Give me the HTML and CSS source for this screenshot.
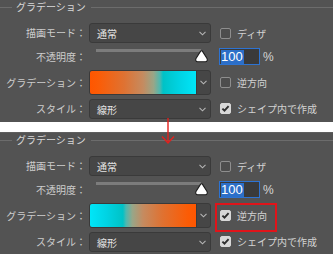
FILE: index.html
```html
<!DOCTYPE html>
<html lang="ja">
<head>
<meta charset="utf-8">
<link rel="stylesheet" href="styles.css">
</head>
<body>
<div class="panel">
  <div class="title"><span class="ln short"></span><span class="ttl">グラデーション</span><span class="ln"></span></div>
  <div class="grid">
    <div class="lbl">描画モード：</div>
    <div class="sel"><span>通常</span><svg class="chev" width="7" height="5" viewBox="0 0 7 5"><polyline points="0.5,0.8 3.5,3.8 6.5,0.8"/></svg></div>
    <div class="chk"><span class="box"></span>ディザ</div>

    <div class="lbl">不透明度：</div>
    <div class="slider"><div class="track"></div><svg class="thumb" width="13" height="13" viewBox="0 0 13 13"><path d="M6.5 0.8C7 0.8 7.4 1.1 7.7 1.6L12 8.5C12.7 9.8 12.1 11.8 10.4 11.8L2.6 11.8C0.9 11.8 0.3 9.8 1 8.5L5.3 1.6C5.6 1.1 6 0.8 6.5 0.8Z"/></svg></div>
    <div class="pct"><span class="num"><span class="hl">100</span></span><span class="unit">%</span></div>

    <div class="lbl">グラデーション：</div>
    <div class="grad"><div class="bar fwd"></div><div class="btn"><svg class="chev" width="7" height="5" viewBox="0 0 7 5"><polyline points="0.5,0.8 3.5,3.8 6.5,0.8"/></svg></div></div>
    <div class="chk"><span class="box"></span>逆方向</div>

    <div class="lbl">スタイル：</div>
    <div class="sel"><span>線形</span><svg class="chev" width="7" height="5" viewBox="0 0 7 5"><polyline points="0.5,0.8 3.5,3.8 6.5,0.8"/></svg></div>
    <div class="chk"><span class="box on"><svg width="11" height="11" viewBox="0 0 11 11"><polyline points="2.4,5.6 4.5,7.7 8.6,3.2"/></svg></span>シェイプ内で作成</div>
  </div>
</div>
<div class="divider"></div>
<div class="panel second">
  <div class="title"><span class="ln short"></span><span class="ttl">グラデーション</span><span class="ln"></span></div>
  <div class="grid">
    <div class="lbl">描画モード：</div>
    <div class="sel"><span>通常</span><svg class="chev" width="7" height="5" viewBox="0 0 7 5"><polyline points="0.5,0.8 3.5,3.8 6.5,0.8"/></svg></div>
    <div class="chk"><span class="box"></span>ディザ</div>

    <div class="lbl">不透明度：</div>
    <div class="slider"><div class="track"></div><svg class="thumb" width="13" height="13" viewBox="0 0 13 13"><path d="M6.5 0.8C7 0.8 7.4 1.1 7.7 1.6L12 8.5C12.7 9.8 12.1 11.8 10.4 11.8L2.6 11.8C0.9 11.8 0.3 9.8 1 8.5L5.3 1.6C5.6 1.1 6 0.8 6.5 0.8Z"/></svg></div>
    <div class="pct"><span class="num"><span class="hl">100</span></span><span class="unit">%</span></div>

    <div class="lbl">グラデーション：</div>
    <div class="grad"><div class="bar rev"></div><div class="btn"><svg class="chev" width="7" height="5" viewBox="0 0 7 5"><polyline points="0.5,0.8 3.5,3.8 6.5,0.8"/></svg></div></div>
    <div class="chk marked"><span class="box on"><svg width="11" height="11" viewBox="0 0 11 11"><polyline points="2.4,5.6 4.5,7.7 8.6,3.2"/></svg></span>逆方向</div>

    <div class="lbl">スタイル：</div>
    <div class="sel"><span>線形</span><svg class="chev" width="7" height="5" viewBox="0 0 7 5"><polyline points="0.5,0.8 3.5,3.8 6.5,0.8"/></svg></div>
    <div class="chk"><span class="box on"><svg width="11" height="11" viewBox="0 0 11 11"><polyline points="2.4,5.6 4.5,7.7 8.6,3.2"/></svg></span>シェイプ内で作成</div>
  </div>
</div>
<svg class="arrow" width="14" height="27" viewBox="0 0 14 27"><line x1="7" y1="0" x2="7" y2="25"/><polyline points="1,18.5 7,25 13,18.5"/></svg>
</body>
</html>
```

FILE: styles.css
```css
* { box-sizing: border-box; }
html, body { margin: 0; padding: 0; }
body {
  width: 333px;
  height: 254px;
  overflow: hidden;
  background: #535353;
  font-family: "Noto Sans CJK JP", "Noto Sans", sans-serif;
  font-size: 10px;
  color: #cfcfcf;
  position: relative;
}
.panel {
  height: 122px;
  background: #535353;
}
.panel.second {
  border-top: 1px solid #5f5f5f;
  height: 122px;
}
.divider {
  height: 10px;
  background: #ffffff;
}
.title {
  display: flex;
  align-items: center;
  height: 14px;
}
.ln {
  flex: 1;
  height: 1px;
  background: #6c6c6c;
}
.ln.short { flex: 0 0 12px; }
.ttl {
  padding: 0 5px 0 4px;
  color: #d8d8d8;
  line-height: 14px;
}
.grid {
  margin-top: 9px;
  display: grid;
  grid-template-columns: 86px 122px 1fr;
  grid-template-rows: 20px 19px 25px 19px;
  column-gap: 3px;
  row-gap: 4px;
  align-items: center;
}
.lbl {
  text-align: right;
  color: #cdcdcd;
  line-height: 12px;
  white-space: nowrap;
}
.sel {
  height: 20px;
  align-self: stretch;
  background: #464646;
  border: 1px solid #3a3a3a;
  border-radius: 3px;
  display: flex;
  align-items: center;
  justify-content: space-between;
  padding: 0 4px 0 7px;
  color: #e4e4e4;
}
.grid > .sel:nth-child(10) { height: 19px; }
.chev polyline {
  fill: none;
  stroke: #b5b5b5;
  stroke-width: 1.1;
}
.chk {
  display: flex;
  align-items: center;
  gap: 6px;
  padding-left: 6px;
  color: #d2d2d2;
  white-space: nowrap;
  position: relative;
}
.box {
  width: 11px;
  height: 11px;
  border: 1px solid #8e8e8e;
  border-radius: 2px;
  background: #4d4d4d;
  display: block;
  flex: none;
}
.box.on {
  background: #d8d8d8;
  border-color: #d8d8d8;
}
.box.on svg { display: block; margin: -1px; }
.box.on polyline {
  fill: none;
  stroke: #2e2e2e;
  stroke-width: 1.9;
}
.chk.marked::after {
  content: "";
  position: absolute;
  left: 1px;
  top: 50%;
  margin-top: -13px;
  width: 58px;
  height: 25px;
  border: 2px solid #e0141a;
}
.slider {
  align-self: stretch;
  position: relative;
  padding: 2px 0 0 7px;
}
.track {
  width: 105px;
  height: 3px;
  background: #7c7c7c;
}
.thumb {
  position: absolute;
  left: 106px;
  top: 3px;
}
.thumb path {
  fill: #ffffff;
  stroke: #1c1c1c;
  stroke-width: 1.1;
}
.pct {
  display: flex;
  align-items: center;
  padding-left: 5px;
}
.num {
  width: 41px;
  height: 17px;
  border: 1px solid #2d73d2;
  background: #3a3a3a;
  display: flex;
  align-items: center;
  padding-left: 1px;
}
.hl {
  background: #2c6fc8;
  color: #ffffff;
  font-family: "Liberation Sans", Arial, sans-serif;
  font-size: 13px;
  line-height: 14px;
  padding-right: 1px;
}
.unit {
  margin-left: 3px;
  font-family: "Liberation Sans", Arial, sans-serif;
  font-size: 12px;
  color: #d6d6d6;
}
.grad {
  align-self: stretch;
  display: flex;
  border: 1px solid #3a3a3a;
  border-radius: 3px;
  overflow: hidden;
  background: #464646;
}
.bar { flex: 1; }
.bar.fwd {
  background: linear-gradient(to right, #ff5600 0%, #fb5c06 8%, #df7232 32%, #c58b60 50%, #98a688 60%, #4db8b0 66%, #00c2c6 69%, #00d4e4 85%, #00e6f8 100%);
}
.bar.rev {
  background: linear-gradient(to left, #ff5600 0%, #fb5c06 8%, #df7232 32%, #c58b60 50%, #98a688 60%, #4db8b0 66%, #00c2c6 69%, #00d4e4 85%, #00e6f8 100%);
}
.btn {
  width: 14px;
  border-left: 1px solid #3a3a3a;
  display: flex;
  align-items: center;
  justify-content: center;
}
.arrow {
  position: absolute;
  left: 161px;
  top: 118px;
}
.arrow line, .arrow polyline {
  fill: none;
  stroke: #e4201c;
  stroke-width: 1.4;
}
```
